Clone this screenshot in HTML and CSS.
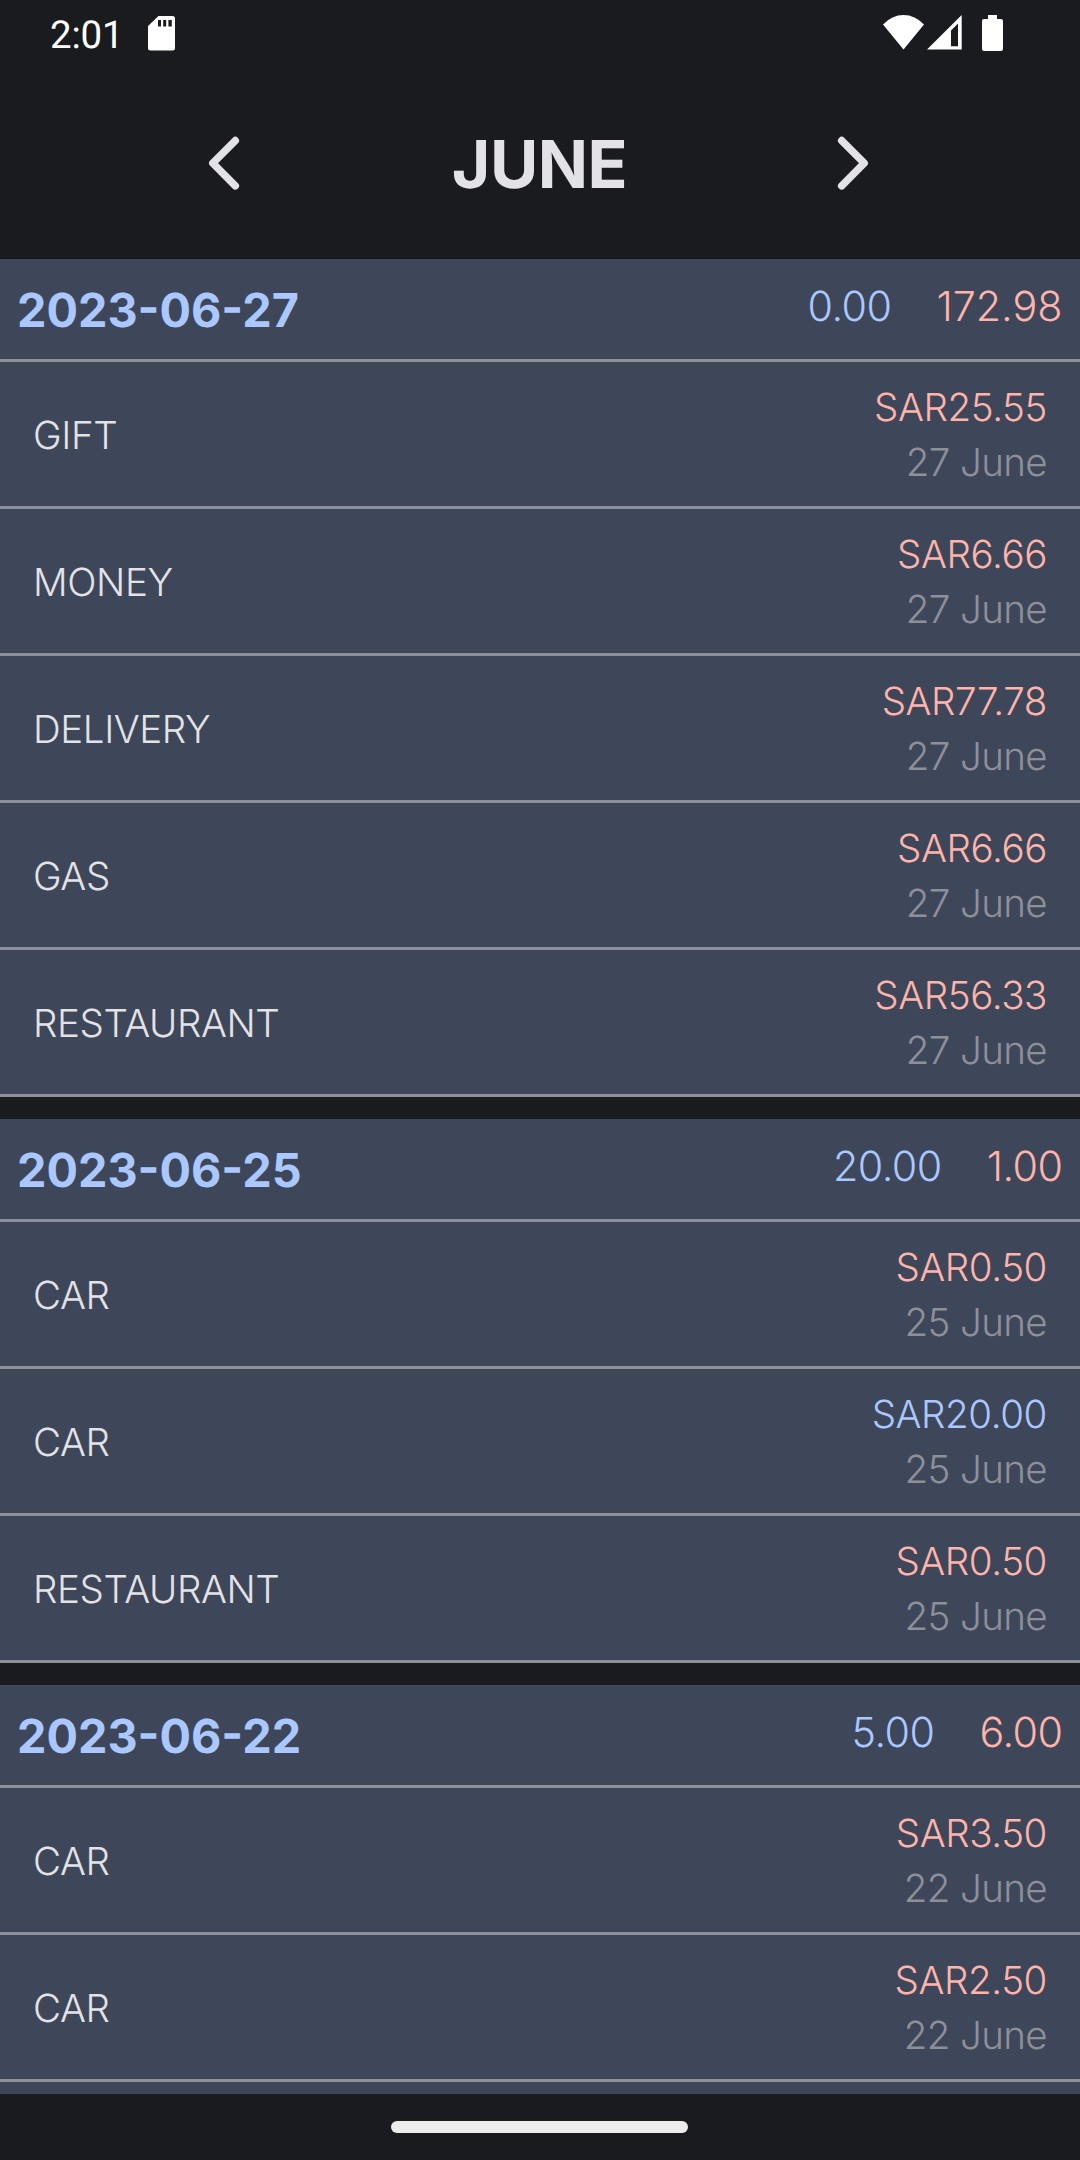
FILE: index.html
```
<!DOCTYPE html>
<html lang="en">
<head>
<meta charset="utf-8">
<title>June</title>
<link rel="stylesheet" href="styles.css">
</head>
<body>
<div class="screen">
  <header class="status">
    <span class="clock">2:01</span>
    <svg class="sd" width="27" height="35" viewBox="0 0 27 35"><path fill="#fff" fill-rule="evenodd" d="M10.500 0H24.500Q27 0 27 2.500V32Q27 34.500 24.500 34.500H2.500Q0 34.500 0 32V10ZM10 4V10.500H13V4ZM15.200 4V10.500H18.200V4ZM20.400 4V10.500H23.800V4Z"/></svg>
    <span class="spacer"></span>
    <svg class="wifi" width="41" height="35" viewBox="0 0 41 35"><path fill="#fff" d="M0 9.500Q9 0 20.500 0T41 9.500L20.500 34.500Z"/></svg>
    <svg class="signal" width="35" height="35" viewBox="0 0 35 35"><path fill="#fff" fill-rule="evenodd" d="M34.700 0V34.500H0ZM31 8.500L24 15.500V31.200H31Z"/></svg>
    <svg class="battery" width="21" height="36" viewBox="0 0 21 36"><path fill="#fff" d="M6 0H15V4H19Q21 4 21 6V34Q21 36 19 36H2Q0 36 0 34V6Q0 4 2 4H6Z"/></svg>
  </header>

  <nav class="month">
    <svg width="66" height="66" viewBox="0 0 66 66"><path class="chevron" d="M44.300 10.600L21.800 33.200L44.300 55.800"/></svg>
    <h1 class="title">JUNE</h1>
    <svg width="66" height="66" viewBox="0 0 66 66"><path class="chevron" d="M21.700 10.600L44.200 33.200L21.700 55.800"/></svg>
  </nav>

  <main class="list">
    <section class="day">
      <div class="day-head"><h2 class="date">2023-06-27</h2><span class="total in">0.00</span><span class="total out wide">172.98</span></div>
      <div class="row"><span class="name">GIFT</span><div class="info"><span class="out">SAR25.55</span><span class="when">27 June</span></div></div>
      <div class="row"><span class="name">MONEY</span><div class="info"><span class="out">SAR6.66</span><span class="when">27 June</span></div></div>
      <div class="row"><span class="name">DELIVERY</span><div class="info"><span class="out">SAR77.78</span><span class="when">27 June</span></div></div>
      <div class="row"><span class="name">GAS</span><div class="info"><span class="out">SAR6.66</span><span class="when">27 June</span></div></div>
      <div class="row"><span class="name">RESTAURANT</span><div class="info"><span class="out">SAR56.33</span><span class="when">27 June</span></div></div>
    </section>
    <section class="day">
      <div class="day-head"><h2 class="date">2023-06-25</h2><span class="total in">20.00</span><span class="total out">1.00</span></div>
      <div class="row"><span class="name">CAR</span><div class="info"><span class="out">SAR0.50</span><span class="when">25 June</span></div></div>
      <div class="row"><span class="name">CAR</span><div class="info"><span class="in">SAR20.00</span><span class="when">25 June</span></div></div>
      <div class="row"><span class="name">RESTAURANT</span><div class="info"><span class="out">SAR0.50</span><span class="when">25 June</span></div></div>
    </section>
    <section class="day">
      <div class="day-head"><h2 class="date">2023-06-22</h2><span class="total in">5.00</span><span class="total out">6.00</span></div>
      <div class="row"><span class="name">CAR</span><div class="info"><span class="out">SAR3.50</span><span class="when">22 June</span></div></div>
      <div class="row"><span class="name">CAR</span><div class="info"><span class="out">SAR2.50</span><span class="when">22 June</span></div></div>
      <div class="row"></div>
    </section>
  </main>

  <footer class="gesture"><span class="pill"></span></footer>
</div>
</body>
</html>
```
FILE: styles.css
```
* { box-sizing: border-box; }
body { margin: 0; background: #1a1b1f; font-family: Inter, "Noto Sans", sans-serif; text-rendering: geometricPrecision; }
.screen { width: 1080px; height: 2160px; display: flex; flex-direction: column; overflow: hidden; background: #1a1b1f; color: #e3e2e6; }

.status { height: 66px; flex: none; display: flex; align-items: flex-start; padding: 15px 77px 0 50px; }
.clock { width: 74px; margin-top: 2px; font: 400 38.5px/38px Roboto, sans-serif; letter-spacing: -0.2px; color: #fff; }
.sd { margin: 1px 0 0 24px; }
.spacer { flex: 1; }
.signal { margin-left: 3px; }
.battery { margin-left: 20px; }

.month { height: 193px; flex: none; display: flex; align-items: center; justify-content: space-between; padding: 0 194px 0 191px; }
.chevron { fill: none; stroke: #e3e2e6; stroke-width: 7.5; stroke-linecap: round; stroke-linejoin: round; }
.title { margin: 2px 0 0 2px; font-size: 66px; line-height: 80px; font-weight: 700; letter-spacing: -0.5px; }

.list { flex: 1; min-height: 0; overflow: hidden; display: flex; flex-direction: column; gap: 22px; }
.day { flex: none; background: #3e4759; }
.day-head { height: 103px; display: flex; align-items: center; gap: 45px; padding: 0 17.5px 0 17px; border-bottom: 3px solid #8e9099; }
.date { margin: 3px auto 0 0; font-size: 46.75px; line-height: 60px; font-weight: 700; color: #aac7ff; }
.total { margin-bottom: 7px; font-size: 41.25px; line-height: 50px; font-weight: 300; letter-spacing: -0.5px; }
.total.wide { letter-spacing: 0; }
.row { height: 147px; display: flex; align-items: center; justify-content: space-between; padding: 4px 33px 0; border-bottom: 3px solid #8e9099; font-size: 38.5px; line-height: 55px; font-weight: 300; letter-spacing: -0.4px; }
.info { display: flex; flex-direction: column; align-items: flex-end; }
.in { color: #aac7ff; }
.out { color: #ffb4ab; }
.when { letter-spacing: -0.6px; color: #8e9099; }

.gesture { height: 66px; flex: none; display: flex; align-items: center; justify-content: center; padding-right: 2px; background: #1a1b1f; }
.pill { width: 297px; height: 12px; border-radius: 6px; background: #ececec; }
```
